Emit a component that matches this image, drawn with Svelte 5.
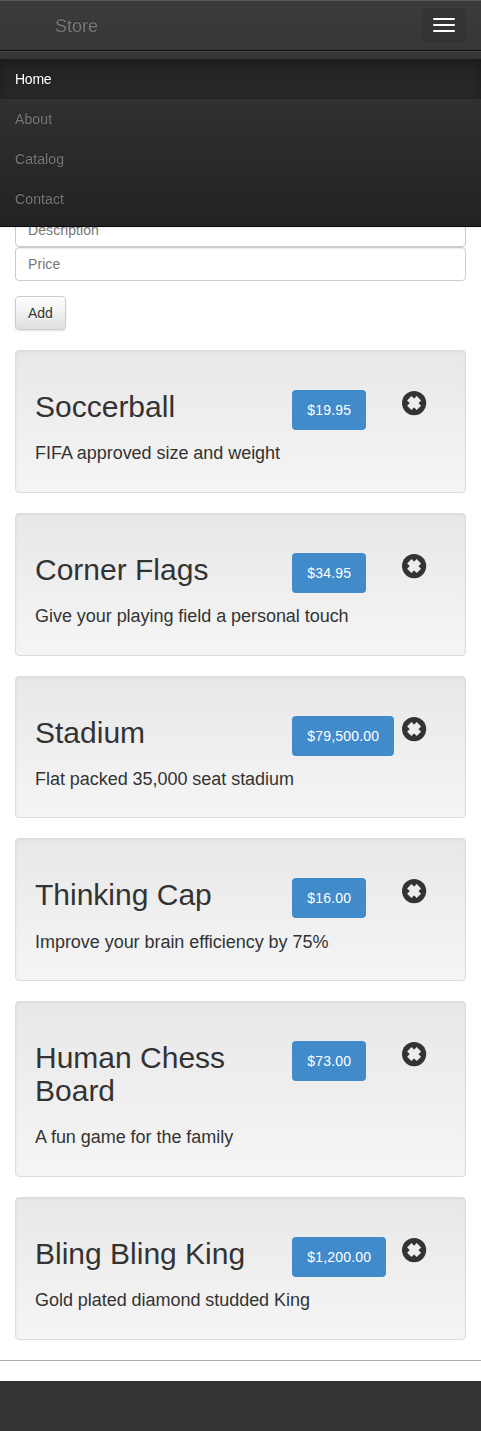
<script>
  const links = ['Home', 'About', 'Catalog', 'Contact'];
  const products = [
    { name: 'Soccerball', text: 'FIFA approved size and weight', price: '$19.95' },
    { name: 'Corner Flags', text: 'Give your playing field a personal touch', price: '$34.95' },
    { name: 'Stadium', text: 'Flat packed 35,000 seat stadium', price: '$79,500.00' },
    { name: 'Thinking Cap', text: 'Improve your brain efficiency by 75%', price: '$16.00' },
    { name: 'Human Chess Board', text: 'A fun game for the family', price: '$73.00' },
    { name: 'Bling Bling King', text: 'Gold plated diamond studded King', price: '$1,200.00' }
  ];
</script>

<nav class="navbar">
  <div class="header">
    <a class="brand" href="#store">Store</a>
    <button class="toggle" aria-label="Menu"><span></span><span></span><span></span></button>
  </div>
  <div class="collapse">
    <ul>
      {#each links as link, i}
        <li class:active={i === 0}><a href={'#' + link}>{link}</a></li>
      {/each}
    </ul>
  </div>
</nav>

<main>
  <form>
    <input placeholder="Description" />
    <input placeholder="Price" />
    <button type="button" class="add">Add</button>
  </form>
  {#each products as p}
    <section class="well">
      <div class="row">
        <h2>{p.name}</h2>
        <div class="price"><span>{p.price}</span></div>
        <div class="remove">
          <svg width="25" height="25" viewBox="0 0 25 25">
            <circle cx="12.1" cy="12.1" r="12.1" fill="#333" />
            <path d="M7.3 7.3L16.9 16.9M16.9 7.3L7.3 16.9" stroke="#ededed" stroke-width="6.2" />
          </svg>
        </div>
      </div>
      <h4>{p.text}</h4>
    </section>
  {/each}
</main>
<hr />
<footer></footer>

<style>
  :global(body) {
    margin: 0;
    background: #fff;
    color: #333;
    font: 14px/20px "Liberation Sans", Arial, sans-serif;
  }
  * { box-sizing: border-box; }
  a { text-decoration: none; color: inherit; }
  .navbar {
    position: fixed;
    top: 0;
    left: 0;
    right: 0;
    z-index: 10;
    border-bottom: 1px solid #080808;
    background: #222 linear-gradient(to bottom, #3c3c3c 0%, #222 100%);
    box-shadow: inset 0 1px 0 rgba(255, 255, 255, .15), 0 1px 5px rgba(0, 0, 0, .075);
    color: #777;
    text-shadow: 0 -1px 0 rgba(0, 0, 0, .25);
  }
  .header {
    height: 50px;
    display: flex;
    justify-content: space-between;
    align-items: flex-start;
    padding: 0 15px 0 40px;
  }
  .brand { font-size: 18px; padding: 16px 15px 14px; }
  .toggle {
    display: flex;
    flex-direction: column;
    gap: 4px;
    margin-top: 8px;
    padding: 9px 10px;
    border: 1px solid #333;
    border-radius: 4px;
    background: #333;
  }
  .toggle span { width: 22px; height: 2px; border-radius: 1px; background: #fff; }
  .collapse {
    border-top: 1px solid #101010;
    box-shadow: inset 0 1px 0 rgba(255, 255, 255, .1);
    padding: 7.5px 0;
  }
  ul { list-style: none; margin: 0; padding: 0; }
  li a { display: block; padding: 10px 15px; letter-spacing: .12px; }
  .active a {
    color: #fff;
    letter-spacing: -.25px;
    background: linear-gradient(to bottom, #222 0%, #282828 100%);
    box-shadow: inset 0 3px 9px rgba(0, 0, 0, .25);
  }
  main { padding: 213px 15px 0; }
  form { margin-bottom: 20px; }
  input {
    display: block;
    width: 100%;
    height: 34px;
    padding: 6px 12px;
    border: 1px solid #ccc;
    border-radius: 4px;
    background: #fff;
    box-shadow: inset 0 1px 1px rgba(0, 0, 0, .075);
    font: inherit;
    letter-spacing: .08px;
  }
  input::placeholder { color: #777; opacity: 1; }
  .add {
    display: block;
    margin-top: 15px;
    height: 34px;
    padding: 6px 12px;
    border: 1px solid #ccc;
    border-radius: 4px;
    background: linear-gradient(to bottom, #fff 0%, #e0e0e0 100%);
    box-shadow: inset 0 1px 0 rgba(255, 255, 255, .15), 0 1px 2px rgba(0, 0, 0, .12);
    color: #333;
    font: inherit;
    text-shadow: 0 1px 0 #fff;
  }
  .well {
    padding: 19px;
    margin-bottom: 20px;
    border: 1px solid #dcdcdc;
    border-radius: 4px;
    background: linear-gradient(to bottom, #e8e8e8 0%, #f5f5f5 100%);
    box-shadow: inset 0 1px 3px rgba(0, 0, 0, .05), 0 1px 0 rgba(255, 255, 255, .1);
  }
  .row {
    display: grid;
    grid-template-columns: 7fr 3fr 2fr;
    align-items: start;
    margin: 0 -15px;
    padding-top: 20px;
  }
  h2 { margin: 0; padding: 0 15px; font-size: 30px; font-weight: 500; line-height: 1.1; }
  h4 { margin: 21.35px 0 8.65px; font-size: 18px; font-weight: 500; line-height: 1.1; letter-spacing: -.04px; }
  .price, .remove { height: 33px; min-width: 0; padding-left: 15px; }
  .price span {
    display: inline-block;
    padding: 10px 15px;
    border-radius: 4px;
    background: #428bca;
    color: #fff;
    letter-spacing: .19px;
  }
  .remove { padding-left: 14px; }
  .remove svg { display: block; margin-top: 1px; }
  hr { height: 1px; margin: 0 0 20px; border: 0; background: #aaa; }
  footer { height: 50px; background: #333; }
</style>
